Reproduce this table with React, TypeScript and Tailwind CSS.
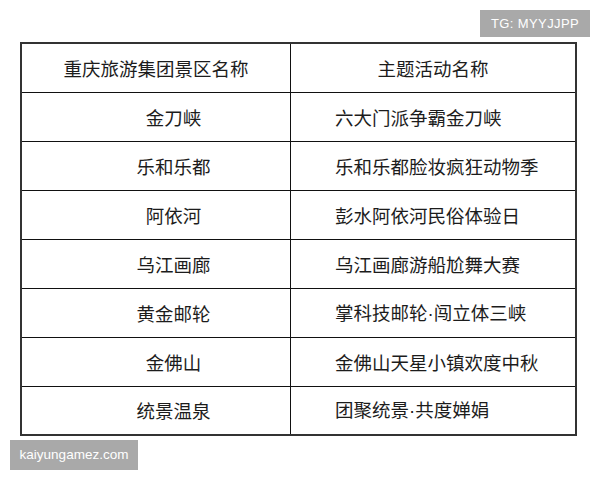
import React from "react";

const rows: [string, string][] = [
  ["金刀峡", "六大门派争霸金刀峡"],
  ["乐和乐都", "乐和乐都脸妆疯狂动物季"],
  ["阿依河", "彭水阿依河民俗体验日"],
  ["乌江画廊", "乌江画廊游船尬舞大赛"],
  ["黄金邮轮", "掌科技邮轮·闯立体三峡"],
  ["金佛山", "金佛山天星小镇欢度中秋"],
  ["统景温泉", "团聚统景·共度婵娟"],
];

function Text({ s }: { s: string }) {
  const parts = s.split("·");
  return (
    <>
      {parts.map((p, i) => (
        <React.Fragment key={i}>
          {i > 0 && (
            <span style={{ fontFamily: '"Liberation Sans", Arial, sans-serif' }}>·</span>
          )}
          {p}
        </React.Fragment>
      ))}
    </>
  );
}

export default function App() {
  return (
    <div
      className="relative w-[600px] h-[480px] bg-white overflow-hidden"
      style={{ fontFamily: '"Noto Sans CJK SC", "Noto Sans", sans-serif' }}
    >
      <div className="pt-[42px] pl-[20px]">
        <div className="w-[557px] border-2 border-[#333] text-[18.5px] text-[#1c1c1c] leading-none">
          <div className="grid grid-cols-[269px_1fr] h-[49px] border-b border-[#111]">
            <div className="flex items-center justify-center border-r border-[#111]">
              重庆旅游集团景区名称
            </div>
            <div className="flex items-center justify-center">主题活动名称</div>
          </div>
          {rows.map(([a, b], i) => (
            <div
              key={i}
              className={
                "grid grid-cols-[269px_1fr] " +
                (i < rows.length - 1 ? "h-[49px] border-b border-[#111]" : "h-[47px]")
              }
            >
              <div className="flex items-center justify-center pl-[35px] border-r border-[#111]">
                {a}
              </div>
              <div className="flex items-center pl-[44px]">
                <span>
                  <Text s={b} />
                </span>
              </div>
            </div>
          ))}
        </div>
      </div>
      <div
        className="absolute left-[480px] top-[10px] w-[110px] h-[27px] bg-[#a9a9a9] text-white text-[13px] flex items-center justify-center tracking-[0.4px]"
        style={{ fontFamily: '"Liberation Sans", Arial, sans-serif' }}
      >
        TG: MYYJJPP
      </div>
      <div
        className="absolute left-[10px] top-[440px] w-[128px] h-[30px] bg-[#a9a9a9] text-white text-[13.5px] flex items-center justify-center"
        style={{ fontFamily: '"Liberation Sans", Arial, sans-serif' }}
      >
        kaiyungamez.com
      </div>
    </div>
  );
}
